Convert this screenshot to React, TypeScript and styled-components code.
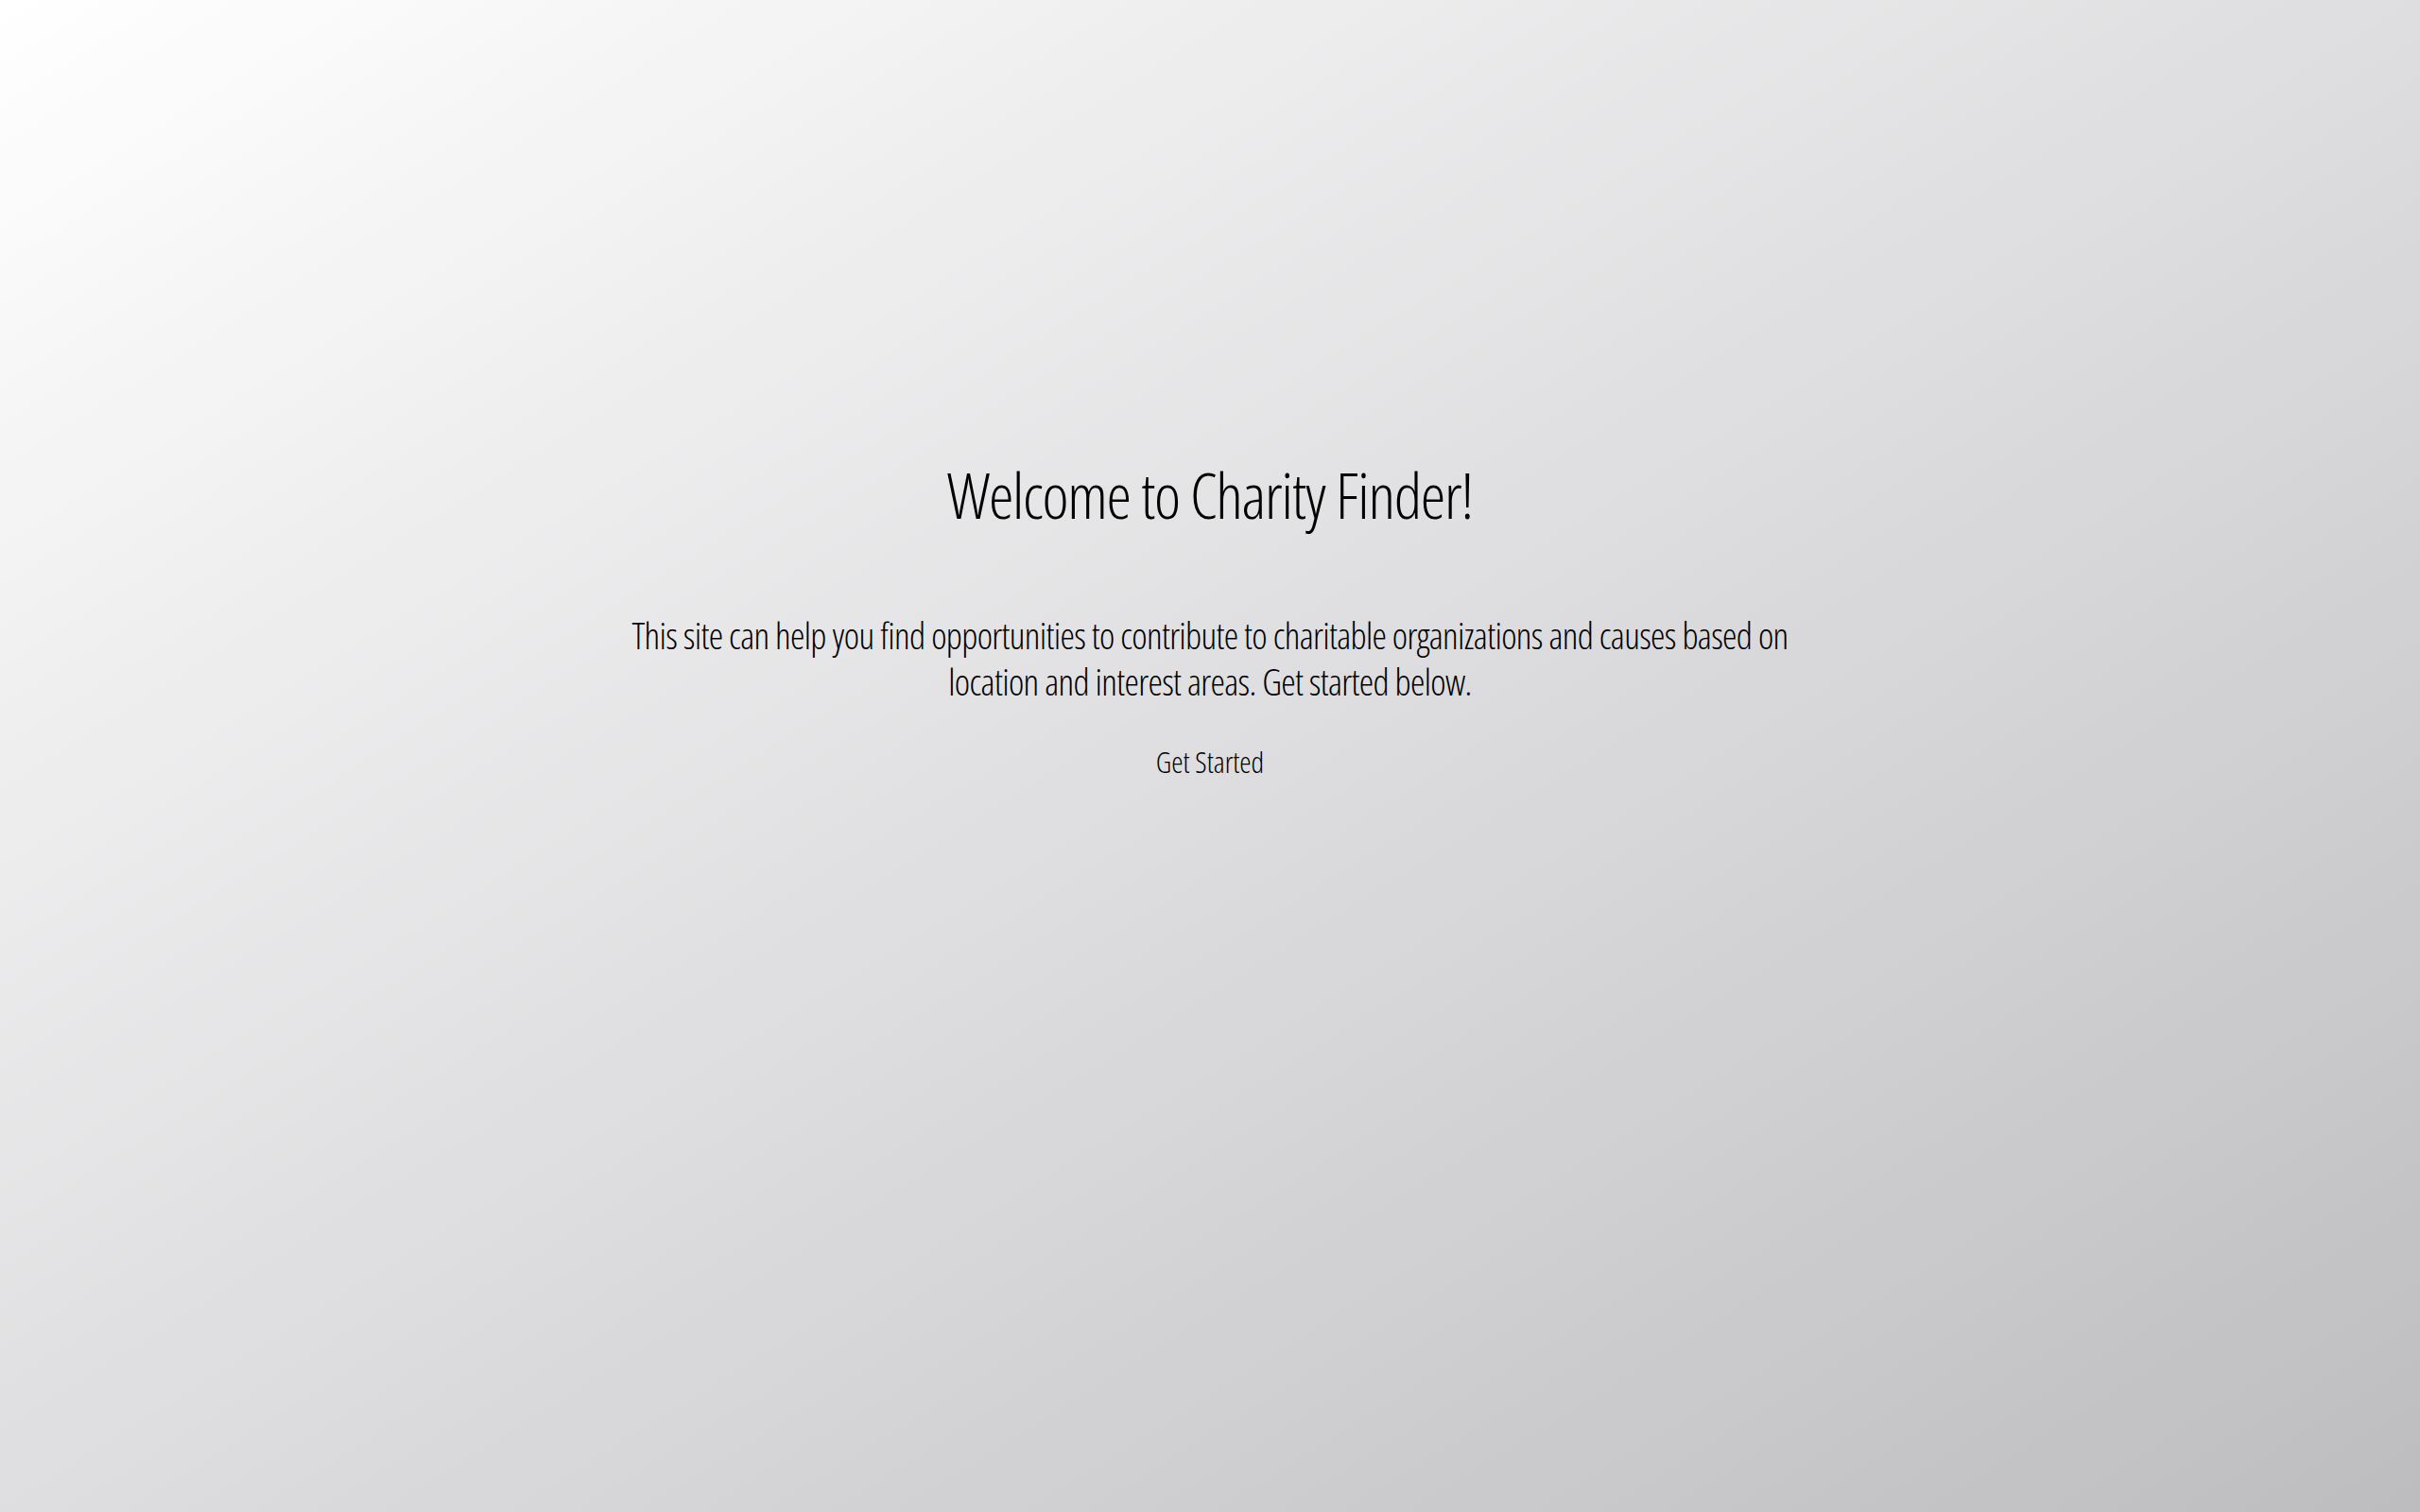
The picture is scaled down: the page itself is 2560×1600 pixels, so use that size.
import React from "react";
import styled, { createGlobalStyle } from "styled-components";

const Global = createGlobalStyle`
  html, body { margin: 0; padding: 0; }
  body { font-family: "Open Sans", "Liberation Sans", sans-serif; font-stretch: 75%; color: #000; }
`;

const Page = styled.main`
  min-height: 100vh;
  box-sizing: border-box;
  background: linear-gradient(to bottom right, #ffffff 0%, #dedee0 50%, #bdbdbf 100%);
  display: flex;
  flex-direction: column;
  align-items: center;
  padding-top: 480px;
  text-align: center;
`;

const Title = styled.h1`
  margin: 0;
  font-size: 67px;
  font-weight: 300;
  font-stretch: 75%;
  letter-spacing: -1.3px;
  line-height: 1.3;
`;

const Lead = styled.p`
  margin: 80px 0 0;
  max-width: 1260px;
  font-size: 39px;
  font-weight: 300;
  font-stretch: 75%;
  letter-spacing: -0.65px;
  line-height: 49px;
`;

const StartButton = styled.button`
  margin-top: 40px;
  background: transparent;
  border: none;
  padding: 0;
  font-family: "Open Sans", "Liberation Sans", sans-serif;
  font-size: 31px;
  font-weight: 300;
  font-stretch: 75%;
  line-height: normal;
  color: #000;
  cursor: pointer;
`;

export default function App() {
  return (
    <>
      <Global />
      <Page>
        <Title>Welcome to Charity Finder!</Title>
        <Lead>
          This site can help you find opportunities to contribute to charitable organizations and causes based on
          location and interest areas. Get started below.
        </Lead>
        <StartButton>Get Started</StartButton>
      </Page>
    </>
  );
}
